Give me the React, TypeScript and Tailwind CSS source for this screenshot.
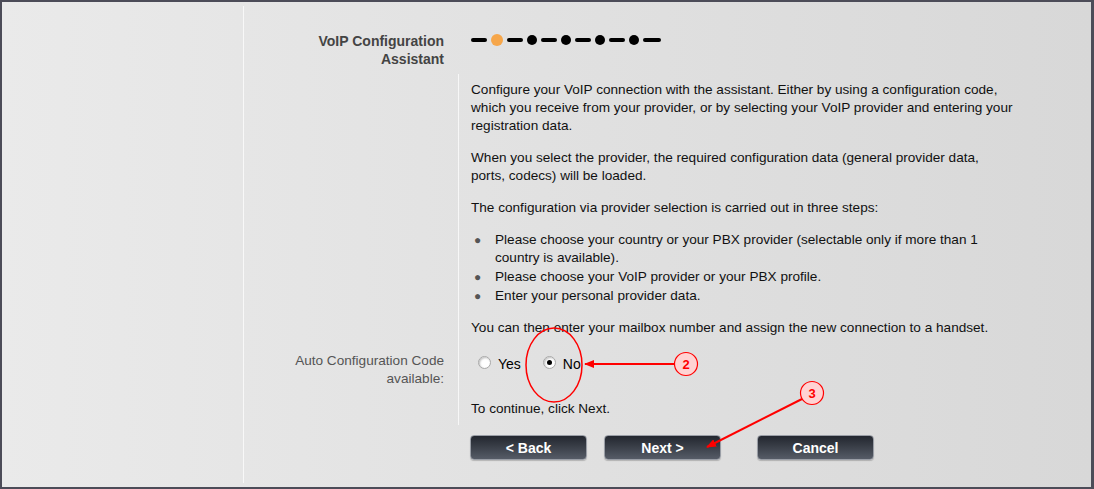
const steps = [true, false, false, false, false];

function StepBar() {
  return (
    <div className="flex items-center gap-[4px]">
      {steps.map((active, i) => (
        <div key={i} className="flex items-center gap-[4px]">
          <span className="block w-[16px] h-[4px] rounded-[2px] bg-black" />
          {active ? (
            <span className="block w-[12px] h-[12px] rounded-full bg-[#f6a64a]" />
          ) : (
            <span className="block w-[10px] h-[10px] rounded-full bg-black" />
          )}
        </div>
      ))}
      <span className="block w-[18px] h-[4px] rounded-[2px] bg-black" />
    </div>
  );
}

function Radio({ checked, label }: { checked?: boolean; label: string }) {
  return (
    <label className="flex items-center gap-[7px]">
      <span className="w-[13px] h-[13px] rounded-full bg-white border border-[#a8a8a8] shadow-[inset_1px_1px_2px_rgba(0,0,0,0.25)] flex items-center justify-center">
        {checked && <span className="block w-[5px] h-[5px] rounded-full bg-black" />}
      </span>
      <span className="text-[14px] text-black mt-[4px]">{label}</span>
    </label>
  );
}

function Btn({ children }: { children: string }) {
  return (
    <button className="w-[117px] h-[25px] rounded-[4px] border border-[#9a9ea6] bg-gradient-to-b from-[#23272f] to-[#565c67] text-white font-bold text-[14px] flex items-center justify-center shadow-[0_1px_1px_rgba(0,0,0,0.2)]">
      {children}
    </button>
  );
}

export default function App() {
  return (
    <div
      className="w-[1094px] h-[489px] border-t-2 border-l-2 border-r-[3px] border-b-2 border-[#4c4c58] bg-gradient-to-r from-[#eaeaea] to-[#d8d8d8] flex text-[13.6px] leading-[18px] text-[#111]"
      style={{ fontFamily: '"Liberation Sans", Arial, sans-serif' }}
    >
      <div className="w-[241px] shrink-0" />
      <div className="w-px bg-[#f8f8f8] my-[4px]" />

      <div className="flex-1 flex flex-col pt-[30px]">
        {/* header row */}
        <div className="flex">
          <div className="w-[200px] text-right font-bold text-[#444] text-[14px] leading-[18px]">
            VoIP Configuration
            <br />
            Assistant
          </div>
          <div className="pl-[27px] pt-[2px]">
            <StepBar />
          </div>
        </div>

        {/* body */}
        <div className="flex mt-[6px]">
          <div className="w-[200px] shrink-0 text-right text-[#555] pt-[278px] leading-[18px]">
            Auto Configuration Code
            <br />
            available:
          </div>
          <div className="ml-[14px] border-l border-[#f7f7f7] pl-[12px] pt-[7px] pb-[7px] w-[560px]">
            <p className="mb-[14px]">
              Configure your VoIP connection with the assistant. Either by using a configuration code, which you receive from your provider, or by selecting your VoIP provider and entering your registration data.
            </p>
            <p className="mb-[14px] pr-[25px]">
              When you select the provider, the required configuration data (general provider data, ports, codecs) will be loaded.
            </p>
            <p className="mb-[14px]">The configuration via provider selection is carried out in three steps:</p>
            <ul className="mb-[14px] flex flex-col gap-[1px]">
              {[
                'Please choose your country or your PBX provider (selectable only if more than 1 country is available).',
                'Please choose your VoIP provider or your PBX profile.',
                'Enter your personal provider data.',
              ].map((t) => (
                <li key={t} className="flex">
                  <span className="w-[24px] shrink-0 pl-[3px] text-[#555] text-[12px]">●</span>
                  <span className="w-[510px]">{t}</span>
                </li>
              ))}
            </ul>
            <p>You can then enter your mailbox number and assign the new connection to a handset.</p>
            <div className="flex items-center gap-[22px] mt-[14px] pl-[7px]">
              <Radio label="Yes" />
              <Radio checked label="No" />
            </div>
            <p className="mt-[27px]">To continue, click Next.</p>
          </div>
        </div>

        <div className="flex gap-[17px] ml-[226px] mt-[10px]">
          <Btn>{'< Back'}</Btn>
          <Btn>{'Next >'}</Btn>
          <div className="w-[2px]" />
          <Btn>Cancel</Btn>
        </div>
      </div>

      {/* annotations overlay */}
      <svg className="absolute left-0 top-0 pointer-events-none" width="1094" height="489">
        <defs>
          <marker id="ah" markerWidth="10" markerHeight="8" refX="9" refY="4" orient="auto" markerUnits="userSpaceOnUse">
            <path d="M0,0 L10,4 L0,8 z" fill="#ff0000" />
          </marker>
        </defs>
        <ellipse cx="554" cy="365" rx="28" ry="37" fill="none" stroke="#ff0000" strokeWidth="1.5" />
        <line x1="674" y1="364" x2="585" y2="364" stroke="#ff0000" strokeWidth="2" markerEnd="url(#ah)" />
        <circle cx="686" cy="364" r="11.5" fill="#ffd3d3" stroke="#ff0000" strokeWidth="1.2" />
        <text x="686" y="369" textAnchor="middle" fontSize="13" fontWeight="bold" fill="#ff0000" fontFamily="Liberation Sans, Arial, sans-serif">2</text>
        <line x1="802" y1="399" x2="707" y2="447" stroke="#ff0000" strokeWidth="2" markerEnd="url(#ah)" />
        <circle cx="812" cy="393" r="11.5" fill="#ffd3d3" stroke="#ff0000" strokeWidth="1.2" />
        <text x="812" y="398" textAnchor="middle" fontSize="13" fontWeight="bold" fill="#ff0000" fontFamily="Liberation Sans, Arial, sans-serif">3</text>
      </svg>
    </div>
  );
}
